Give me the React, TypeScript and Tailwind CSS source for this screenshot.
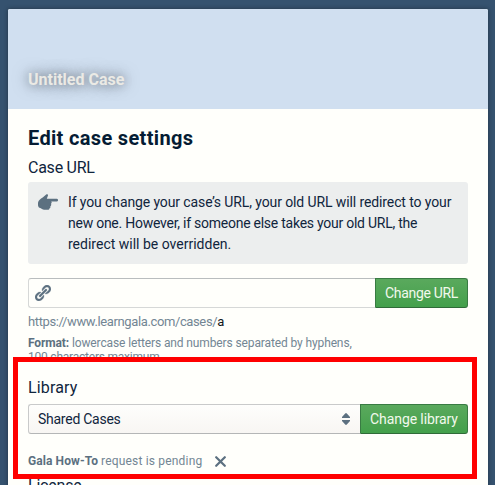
import type { ReactNode } from "react";

function GreenButton({ children, width }: { children: ReactNode; width: string }) {
  return (
    <button
      className={`${width} h-[30px] shrink-0 whitespace-nowrap rounded-r-[3px] border border-[#397b43] border-b-[#2f6b38] bg-gradient-to-b from-[#5aa95d] to-[#43a04b] text-center text-[14px] leading-[28px] text-[#f2f9ed]`}
    >
      {children}
    </button>
  );
}

function PointingHand() {
  return (
    <svg width="20" height="16" viewBox="0 0 20 16" fill="#5c7080">
      <path d="M0 8.8C.4 6.2 2.5 4.5 4.7 3.4L8.2.5C9.2-.2 10.4.6 9.9 1.7L8.8 4.8H18.7C20.5 4.8 20.5 7.4 18.7 7.4H13.2C14 8 13.8 9.3 12.9 9.7C13.6 10.7 13.2 11.9 12.3 12.2C12.8 13.2 12.2 14.1 11.5 14.3C11.3 15.3 10.8 15.8 9.8 15.8H6.2C4.4 15.8 3.5 14.4 2.3 14.1C.3 13.8-.3 11.5 0 8.8Z" />
    </svg>
  );
}

function LinkIcon() {
  return (
    <svg width="16" height="16" viewBox="0 0 16 16" fill="#5c7080" stroke="#5c7080" strokeWidth="0.3">
      <path d="M4.99 11.99c.28 0 .53-.11.71-.29l6-6a1.003 1.003 0 0 0-1.42-1.42l-6 6a1.003 1.003 0 0 0 .71 1.71zm3.85-2.02L6.4 12.41l-1 1-.01-.01c-.36.36-.85.6-1.4.6-1.1 0-2-.9-2-2 0-.55.24-1.04.6-1.4l-.01-.01 1-1 2.44-2.44c-.33-.1-.67-.16-1.03-.16-1.1 0-2.09.46-2.81 1.19l-.02-.02-1 1 .02.02c-.73.72-1.19 1.71-1.19 2.81 0 2.21 1.79 4 4 4 1.1 0 2.09-.46 2.81-1.19l.02.02 1-1-.02-.02c.73-.72 1.19-1.71 1.19-2.81 0-.35-.06-.69-.15-1.02zM16 4c0-2.21-1.79-4-4-4-1.1 0-2.09.46-2.81 1.19l-.02-.02-1 1 .02.02C7.46 2.91 7 3.9 7 5c0 .36.06.7.15 1.03l2.44-2.44 1-1 .01.01c.36-.37.85-.6 1.4-.6 1.1 0 2 .9 2 2 0 .55-.24 1.04-.6 1.4l.01.01-1 1-2.44 2.44c.33.09.67.15 1.03.15 1.1 0 2.09-.46 2.81-1.19l.02.02 1-1-.02-.02C15.54 6.09 16 5.1 16 4z" />
    </svg>
  );
}

export default function App() {
  return (
    <div className="relative flex h-[485px] w-[495px] overflow-hidden bg-[#35526f] pl-2 pt-[9px] font-['Roboto','Liberation_Sans',sans-serif] text-[#10253d]">
      <main className="h-[490px] w-[480px] shrink-0 rounded-[2px] bg-[#fffffb] shadow-[0_0_4px_rgba(16,22,26,0.5)]">
        <header className="h-[100px] rounded-t-[2px] bg-[#d0dff0] px-5 pt-[60px]">
          <span className="block w-max text-[16px] font-bold leading-[22px] text-[#ebeae5] [text-shadow:0_0_15px_rgba(0,0,0,0.55),0_0_10px_rgba(0,0,0,0.2)]">
            Untitled Case
          </span>
        </header>
        <div className="flex flex-col items-start whitespace-nowrap px-5">
          <h1 className="mt-[16px] text-[20px] font-bold leading-[26px] tracking-[0.33px] text-[#051c33]">Edit case settings</h1>
          <h2 className="mt-[7px] text-[16px] leading-[20px] tracking-[-0.25px]">Case URL</h2>
          <div className="mt-[4px] flex h-[82px] w-[440px] rounded-[3px] bg-[#eceeee] pl-[10px] pt-[10px]">
            <div className="w-[30px] pt-[2px]">
              <PointingHand />
            </div>
            <div className="flex flex-col items-start text-[14px] leading-[21px]">
              <span className="tracking-[-0.11px]">If you change your case’s URL, your old URL will redirect to your</span>
              <span className="tracking-[-0.25px]">new one. However, if someone else takes your old URL, the</span>
              <span>redirect will be overridden.</span>
            </div>
          </div>
          <div className="mt-[14px] flex h-[30px] w-[440px]">
            <div className="flex-1 rounded-l-[3px] border border-r-0 border-[#d6d8d7] border-t-[#b9bdbe] pl-[6px] pt-[6px]">
              <LinkIcon />
            </div>
            <GreenButton width="w-[93px]">
              <span className="tracking-[-0.33px]">Change URL</span>
            </GreenButton>
          </div>
          <p className="mt-[4px] text-[13px] leading-[20px] tracking-[-0.38px] text-[#738694]">
            <span>https://www.learngala.com/cases/</span>
            <span className="text-[#10161a]">a</span>
          </p>
          <p className="mt-[4px] text-[12px] leading-[14px] tracking-[-0.12px] text-[#738694]">
            <b className="text-[#5c7080]">Format:</b> lowercase letters and numbers separated by hyphens,
            <br />
            <span className="tracking-[-0.22px]">100 characters maximum</span>
          </p>
          <h2 className="mt-[14px] text-[16px] leading-[20px] tracking-[0.15px]">Library</h2>
          <div className="mt-[6px] flex h-[30px] w-[440px]">
            <div className="flex flex-1 items-center justify-between rounded-l-[3px] border border-r-0 border-[#c9caca] border-b-[#b4b6b6] bg-gradient-to-b from-[#fefefc] to-[#f8f6f3] pl-[9px] pr-[10px] text-[14px]">
              <span className="tracking-[-0.26px]">Shared Cases</span>
              <svg width="8" height="12" viewBox="0 0 8 12" fill="#5c7080">
                <path d="M0 5V4L3.2.4Q4-.3 4.8.4L8 4V5ZM0 7H8V8L4.8 11.6Q4 12.3 3.2 11.6L0 8Z" />
              </svg>
            </div>
            <GreenButton width="w-[108px]">
              <span className="tracking-[-0.1px]">Change library</span>
            </GreenButton>
          </div>
          <div className="mt-[17px] flex h-[20px] items-center text-[12px] text-[#738694]">
            <b className="mr-[3px] tracking-[0.08px] text-[#5c7080]">Gala How-To</b>
            <span className="tracking-[0.18px]">request is pending</span>
            <svg className="ml-[13px]" width="11" height="11" viewBox="0 0 11 11" stroke="#5c7080" strokeWidth="2.2" strokeLinecap="round">
              <path d="M1.2 1.2 9.8 9.8M9.8 1.2 1.2 9.8" />
            </svg>
          </div>
          <h2 className="mt-[5px] text-[16px] leading-[20px] tracking-[-0.2px]">License</h2>
        </div>
      </main>
      <div className="absolute left-[13px] top-[357px] h-[122px] w-[464px] border-[5px] border-[#ff0000]" />
    </div>
  );
}
